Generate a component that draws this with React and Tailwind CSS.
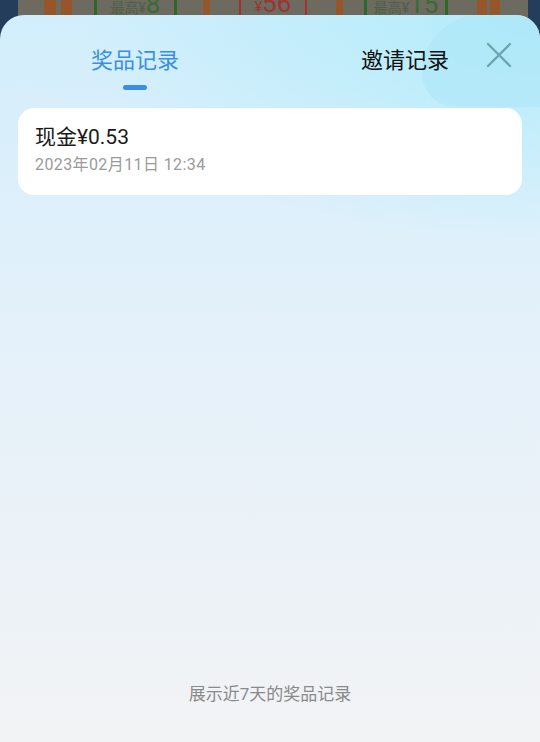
import React from "react";

// Prize records sheet, shown over the dimmed game page.

const records = [
  { id: 1, title: "现金¥0.53", time: "2023年02月11日 12:34" },
];

function GameStrip() {
  return (
    <div className="relative h-[40px] overflow-hidden bg-[#6d6a5f]">
      <div className="absolute left-0 top-0 h-full w-[18px] bg-[#243d5a]" />
      <div className="absolute right-0 top-0 h-full w-[12px] bg-[#243d5a]" />
      <div className="absolute left-[44px] top-0 h-full w-[12px] bg-[#97552a]" />
      <div className="absolute left-[61px] top-0 h-full w-[11px] bg-[#97552a]" />
      <div className="absolute left-[203px] top-0 h-full w-[7px] bg-[#97552a]" />
      <div className="absolute left-[336px] top-0 h-full w-[7px] bg-[#97552a]" />
      <div className="absolute left-[477px] top-0 h-full w-[10px] bg-[#97552a]" />
      <div className="absolute left-[490px] top-0 h-full w-[10px] bg-[#97552a]" />

      <div className="absolute left-[94px] top-0 h-full w-[83px] border-x-[3px] border-[#2b6a26] flex items-start justify-center">
        <span className="-mt-[9px] text-[#4d5f49] whitespace-nowrap">
          <span className="text-[14px]">最高¥</span>
          <span className="text-[26px] leading-none text-[#3a6a34]">8</span>
        </span>
      </div>
      <div className="absolute left-[239px] top-0 h-full w-[68px] border-x-[2px] border-[#a83030] flex items-start justify-center">
        <span className="-mt-[10px] text-[#9b3531] whitespace-nowrap">
          <span className="text-[14px]">¥</span>
          <span className="text-[26px] leading-none">56</span>
        </span>
      </div>
      <div className="absolute left-[364px] top-0 h-full w-[84px] border-x-[3px] border-[#2b6a26] flex items-start justify-center">
        <span className="-mt-[9px] text-[#4d5f49] whitespace-nowrap">
          <span className="text-[14px]">最高¥</span>
          <span className="text-[26px] leading-none text-[#3a6a34]">15</span>
        </span>
      </div>
    </div>
  );
}

export default function App() {
  return (
    <div
      className="w-[540px] h-[742px] overflow-hidden bg-[#6d6a5f] flex flex-col"
      style={{ fontFamily: 'Roboto, "Noto Sans CJK SC", "Noto Sans", sans-serif' }}
    >
      <GameStrip />

      <div className="relative -mt-[25px] flex-1 rounded-t-[24px] overflow-hidden bg-gradient-to-b from-[#d2eefc] via-[#e5f1fa] via-45% to-[#f1f3f5] flex flex-col">
        {/* soft decorative blobs */}
        <div className="absolute inset-0 bg-[radial-gradient(ellipse_85%_32%_at_top_right,#b2ecfa,transparent)]" />
        <div className="absolute right-0 top-0 h-[92px] w-[118px] rounded-bl-[46px] rounded-tl-[80px] bg-[#a9e6f8] opacity-50" />
        <div className="absolute left-[-20px] top-[70px] h-[60px] w-[90px] rounded-t-[40px] bg-[#d8eefb] opacity-70" />

        <div className="relative grid grid-cols-2 pt-[31px]">
          <div className="flex flex-col items-center">
            <span className="text-[22px] leading-[30px] text-[#3b8fe0]">奖品记录</span>
            <span className="mt-[9px] h-[5px] w-[24px] rounded-full bg-[#3a8de8]" />
          </div>
          <div className="flex flex-col items-center">
            <span className="text-[22px] leading-[30px] text-[#111]">邀请记录</span>
          </div>
          <button className="absolute right-[27px] top-[26px] h-[28px] w-[28px] flex items-center justify-center">
            <svg width="26" height="26" viewBox="0 0 26 26" fill="none" stroke="#6aa6ae" strokeWidth="2.4" strokeLinecap="round">
              <path d="M2 2 L24 24 M24 2 L2 24" />
            </svg>
          </button>
        </div>

        <div className="relative mt-[18px] mx-[18px] flex flex-col gap-3">
          {records.map((r) => (
            <div key={r.id} className="rounded-[16px] bg-white px-[17px] pt-[15px] pb-[19px]">
              <div className="text-[21px] leading-[28px] text-[#1a1a1a]">{r.title}</div>
              <div className="mt-[3px] text-[16px] leading-[22px] tracking-[0.4px] text-[#9a9a9a]">{r.time}</div>
            </div>
          ))}
        </div>

        <div className="flex-1" />
        <div className="relative pb-[36px] pt-[20px] text-center text-[17px] leading-[24px] text-[#8a8a8a] bg-gradient-to-b from-transparent to-[#f2f3f5]">
          展示近7天的奖品记录
        </div>
      </div>
    </div>
  );
}
